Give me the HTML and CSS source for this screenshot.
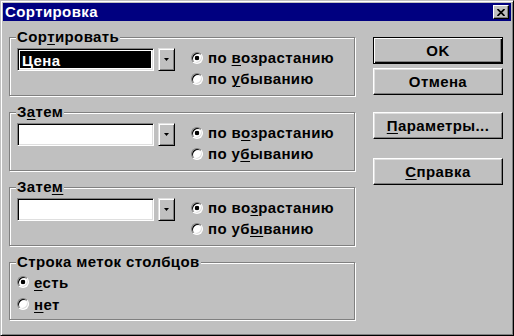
FILE: index.html
```html
<!DOCTYPE html>
<html lang="ru">
<head>
  <meta charset="UTF-8">
  <title>Сортировка</title>
  <link rel="stylesheet" href="styles.css">
</head>
<body>

  <div class="window">
    <div class="titlebar">
      <span class="title">Сортировка</span>
      <span class="close">
        <svg width="8" height="7" viewBox="0 0 8 7"><path d="M0.5 0 L7.5 7 M7.5 0 L0.5 7" stroke="#000" stroke-width="1.7"/></svg>
      </span>
    </div>

    <div class="content">
      <div class="groups">

        <fieldset class="group">
          <legend>Сор<u>т</u>ировать</legend>
          <div class="sort-row">
            <div class="combo">
              <div class="field selected"><span>Цена</span></div>
              <span class="drop"><svg width="5" height="3" viewBox="0 0 5 3"><path d="M0 0h5l-2.5 3z" fill="#000"/></svg></span>
            </div>
            <div class="radios">
              <label class="option"><span class="radio checked"></span><span>по <u>в</u>озрастанию</span></label>
              <label class="option"><span class="radio"></span><span>по <u>у</u>быванию</span></label>
            </div>
          </div>
        </fieldset>

        <fieldset class="group">
          <legend>З<u>а</u>тем</legend>
          <div class="sort-row">
            <div class="combo">
              <div class="field"></div>
              <span class="drop"><svg width="5" height="3" viewBox="0 0 5 3"><path d="M0 0h5l-2.5 3z" fill="#000"/></svg></span>
            </div>
            <div class="radios">
              <label class="option"><span class="radio checked"></span><span>по в<u>о</u>зрастанию</span></label>
              <label class="option"><span class="radio"></span><span>по у<u>б</u>ыванию</span></label>
            </div>
          </div>
        </fieldset>

        <fieldset class="group">
          <legend>Зате<u>м</u></legend>
          <div class="sort-row">
            <div class="combo">
              <div class="field"></div>
              <span class="drop"><svg width="5" height="3" viewBox="0 0 5 3"><path d="M0 0h5l-2.5 3z" fill="#000"/></svg></span>
            </div>
            <div class="radios">
              <label class="option"><span class="radio checked"></span><span>по во<u>з</u>растанию</span></label>
              <label class="option"><span class="radio"></span><span>по уб<u>ы</u>ванию</span></label>
            </div>
          </div>
        </fieldset>

        <fieldset class="group header-row">
          <legend>Строка меток столбцов</legend>
          <label class="option"><span class="radio checked"></span><span><u>е</u>сть</span></label>
          <label class="option"><span class="radio"></span><span><u>н</u>ет</span></label>
        </fieldset>

      </div>

      <div class="buttons">
        <button class="btn default">OK</button>
        <button class="btn cancel">Отмена</button>
        <button class="btn options"><u>П</u>араметры...</button>
        <button class="btn help"><u>С</u>правка</button>
      </div>
    </div>
  </div>

</body>
</html>
```

FILE: styles.css
```css
* {
  box-sizing: border-box;
}

body {
  margin: 0;
  font: bold 15px "Liberation Sans", Arial, sans-serif;
  letter-spacing: 0.4px;
  color: #000;
}

u {
  text-underline-offset: 2px;
  text-decoration-thickness: 1px;
}

.window {
  width: 514px;
  height: 336px;
  background: #c0c0c0;
  border: 1px solid;
  border-color: #c0c0c0 #000 #000 #c0c0c0;
  box-shadow: inset 1px 1px #fff, inset -1px -1px #808080;
  padding: 2px;
}

.titlebar {
  height: 18px;
  background: #000080;
  color: #fff;
  display: flex;
  align-items: center;
  justify-content: space-between;
  padding: 0 2px;
}

.title {
  line-height: 18px;
}

.close {
  width: 16px;
  height: 14px;
  background: #c0c0c0;
  border: 1px solid;
  border-color: #fff #000 #000 #fff;
  box-shadow: inset -1px -1px #808080;
  display: flex;
  align-items: center;
  justify-content: center;
}

.content {
  display: flex;
  padding: 8px 7px 0 6px;
}

.groups {
  width: 346px;
}

.group {
  margin: 0 0 8px;
  padding: 2px 7px 6px;
  min-width: 0;
  border: 1px solid #808080;
  box-shadow: inset 1px 1px #fff, 1px 1px #fff;
}

.group legend {
  padding: 0 1px;
  margin-left: -1px;
  line-height: 16px;
  background: #c0c0c0;
}

.sort-row {
  display: flex;
  align-items: flex-start;
}

.combo {
  display: flex;
  gap: 4px;
  margin-top: 1px;
}

.field {
  width: 137px;
  height: 23px;
  padding: 2px;
  background: #fff;
  border: 1px solid;
  border-color: #808080 #fff #fff #808080;
  box-shadow: inset 1px 1px #000, inset -1px -1px #dfdfdf;
}

.field.selected span {
  display: block;
  height: 100%;
  padding-left: 2px;
  line-height: 19px;
  background: #000;
  color: #fff;
}

.drop {
  width: 17px;
  height: 23px;
  display: flex;
  align-items: center;
  justify-content: center;
  background: #c0c0c0;
  border: 1px solid;
  border-color: #dfdfdf #000 #000 #dfdfdf;
  box-shadow: inset 1px 1px #fff, inset -1px -1px #808080;
}

.radios {
  margin-left: 16px;
}

.option {
  display: flex;
  align-items: center;
  height: 21px;
}

.radio {
  width: 12px;
  height: 12px;
  margin-right: 5px;
  border-radius: 50%;
  background: #fff;
  border: 1px solid;
  border-color: #808080 #fff #fff #808080;
  box-shadow: inset 1px 1px #000, inset -1px -1px #dfdfdf;
}

.radio.checked {
  background: radial-gradient(circle, #000 0 2px, #fff 2.6px);
}

.header-row {
  padding-top: 1px;
  padding-bottom: 4px;
}

.header-row .option {
  height: 22px;
}

.buttons {
  width: 130px;
  margin-left: 18px;
  display: flex;
  flex-direction: column;
}

.btn {
  height: 27px;
  padding: 0;
  font: inherit;
  letter-spacing: inherit;
  color: #000;
  background: #c0c0c0;
  border: 1px solid;
  border-color: #fff #000 #000 #fff;
  box-shadow: inset -1px -1px #808080, inset 1px 1px #dfdfdf;
}

.btn.default {
  margin-top: 8px;
  border-color: #000;
  box-shadow: inset 1px 1px #fff, inset -1px -1px #000, inset -2px -2px #808080;
}

.btn.cancel {
  margin-top: 4px;
}

.btn.options {
  margin-top: 17px;
}

.btn.help {
  margin-top: 19px;
}
```
